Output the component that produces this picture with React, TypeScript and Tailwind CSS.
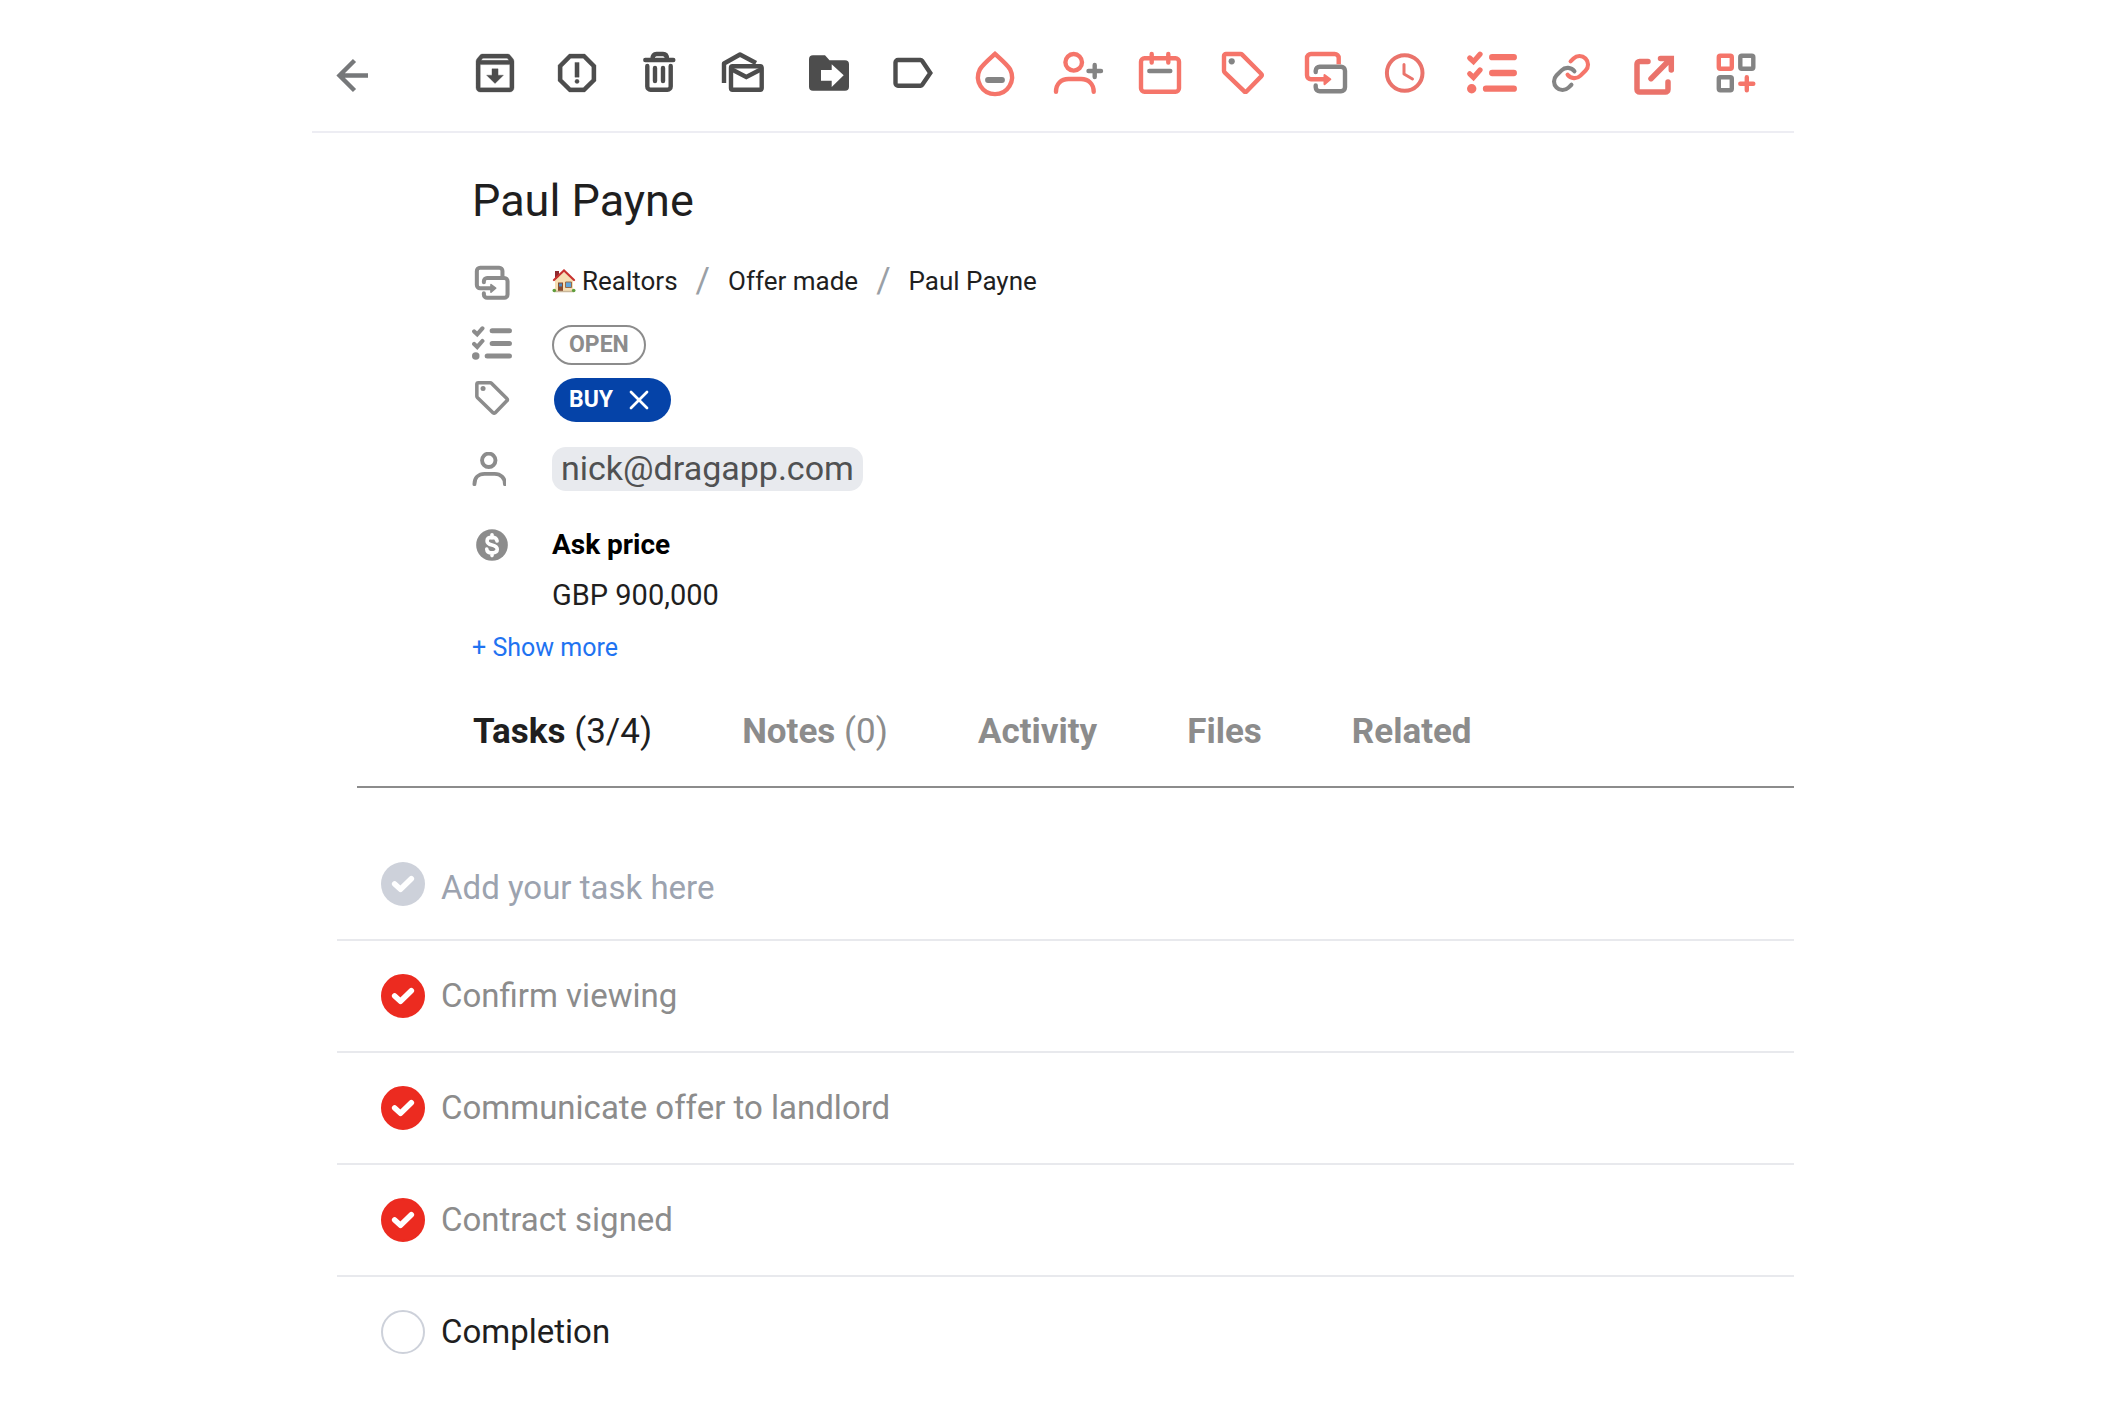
import { useState } from 'react';
import type { ReactNode } from 'react';
import { X } from 'lucide-react';

const CORAL = '#f5756a';
const ROSE = '#ea736b';
const GREY = '#848484';
const DARK = '#4d4d4d';

const ToolIcon = ({ children }: { children: ReactNode }) => (
  <svg viewBox="0 0 60 48" className="w-[60px] h-12" fill="none" strokeWidth={4.4} aria-hidden="true">
    {children}
  </svg>
);

// Shapes shared by the toolbar and the detail rows
const MoveShape = ({ front, back }: { front: string; back: string }) => (
  <g strokeLinecap="round">
    <path d="M51 21.7a4 4 0 0 0-4-4H25.7a4 4 0 0 0-4 4V23M21.7 36.5v1.8a4 4 0 0 0 4 4H47a4 4 0 0 0 4-4V21.7" stroke={back} />
    <path d="M44.7 15.2V9a4 4 0 0 0-4-4H17a4 4 0 0 0-4 4v17.3a4 4 0 0 0 4 4h14" stroke={front} strokeLinecap="butt" />
    <path d="M30.5 26l5.800 4.300-5.800 4.900z" fill={front} stroke={front} strokeWidth={2} strokeLinejoin="round" />
  </g>
);

const ListShape = ({ color }: { color: string }) => (
  <g stroke={color} strokeLinecap="round">
    <path d="M9.7 9l3.8 3.6L20 5.2M9.7 24.8l3.8 3.6L20 21" strokeWidth={5.2} />
    <path d="M32.2 8.2h21.6M32.2 24h21.6M26 39.7h27.8" strokeWidth={6.3} />
    <circle cx={11.7} cy={39.7} r={4.7} fill={color} stroke="none" />
  </g>
);

const TagShape = ({ color, dot }: { color: string; dot: string }) => (
  <g>
    <path d="M15 5h14.7a2 2 0 0 1 1.4.6L50.4 25a1.5 1.5 0 0 1 0 2.2L35.5 42.4a1.5 1.5 0 0 1-2.2 0L13.6 23.3a2 2 0 0 1-.6-1.4V7a2 2 0 0 1 2-2z" stroke={color} />
    <circle cx={20.7} cy={12.3} r={3.1} fill={dot} />
  </g>
);

const PersonShape = ({ color }: { color: string }) => (
  <g stroke={color} strokeLinecap="round">
    <circle cx={28.7} cy={13.3} r={8.3} />
    <path d="M11 42.7C11 35 16 30 23.5 30H36c7.5 0 12.7 5 12.7 12.7" />
  </g>
);

const tools = [
  {
    label: 'Archive',
    icon: (
      <g transform="translate(5.7 -1.3) scale(2.11)" fill={DARK} stroke={DARK} strokeWidth={0.15}>
        <path d="M20.54 5.23l-1.39-1.68C18.88 3.21 18.47 3 18 3H6c-.47 0-.88.21-1.16.55L3.46 5.23C3.17 5.57 3 6.02 3 6.5V19c0 1.1.9 2 2 2h14c1.1 0 2-.9 2-2V6.5c0-.48-.17-.93-.46-1.27zM6.24 5h11.52l.83 1H5.42l.82-1zM5 19V8h14v11H5zm8.45-9h-2.9v3H8l4 4 4-4h-2.55z" />
      </g>
    ),
  },
  {
    label: 'Report spam',
    icon: (
      <g transform="translate(4.7 -1.3) scale(2.11)" fill={DARK} stroke={DARK} strokeWidth={0.15}>
        <path d="M15.73 3H8.27L3 8.27v7.46L8.27 21h7.46L21 15.73V8.27L15.73 3zM19 14.9L14.9 19H9.1L5 14.9V9.1L9.1 5h5.8L19 9.1v5.8z" />
        <circle cx={12} cy={16} r={1} />
        <path d="M11 7h2v7h-2z" />
      </g>
    ),
  },
  {
    label: 'Delete',
    icon: (
      <g stroke={DARK} strokeLinecap="round">
        <path d="M15.3 11h28M22.5 10c0-3.5 1.5-5 4-5h6.5c2.5 0 4 1.5 4 5" />
        <path d="M17.3 17v20.5a3.2 3.2 0 0 0 3.2 3.2h17a3.2 3.2 0 0 0 3.2-3.2V17M25 19v13M33 19v13" />
      </g>
    ),
  },
  {
    label: 'Mark as read',
    icon: (
      <g stroke={DARK}>
        <path d="M11 34V14.5L27 5.5l16 8.5" strokeLinejoin="round" />
        <rect x={18} y={17.3} width={30.7} height={23.4} rx={1.5} />
        <path d="M18 20l15.3 8L48.7 20" />
      </g>
    ),
  },
  {
    label: 'Move to folder',
    icon: (
      <g>
        <path d="M17 6.3h12l4.5 5H49a4 4 0 0 1 4 4v22.4a4 4 0 0 1-4 4H17a4 4 0 0 1-4-4V10.3a4 4 0 0 1 4-4z" fill={DARK} />
        <path d="M25 21h10.7v-5.7l12 11-12 11.7v-6.3H25z" fill="#fff" />
      </g>
    ),
  },
  {
    label: 'Label',
    icon: <path d="M19 11h22.5a2 2 0 0 1 1.6.8L51.3 24l-8.2 12a2 2 0 0 1-1.6.8H19a2.5 2.5 0 0 1-2.5-2.5V13.5A2.5 2.5 0 0 1 19 11z" stroke={DARK} />,
  },
  {
    label: 'Color',
    icon: (
      <g strokeLinecap="round">
        <path d="M33 5C27.5 10 20.5 16 17.8 20.5a17 17 0 1 0 30.4 0C45.5 16 38.5 10 33 5z" stroke={CORAL} />
        <path d="M26 31h14" stroke={GREY} strokeWidth={5.8} />
      </g>
    ),
  },
  {
    label: 'Assign',
    icon: (
      <g>
        <PersonShape color={CORAL} />
        <path d="M43.5 22H56M49.7 16v12" stroke={GREY} strokeLinecap="round" />
      </g>
    ),
  },
  {
    label: 'Due date',
    icon: (
      <g strokeLinecap="round">
        <rect x={13} y={9.3} width={38} height={33.4} rx={3.5} stroke={CORAL} />
        <path d="M23.7 5v8.5M40.3 5v8.5" stroke={CORAL} />
        <path d="M21.3 22h21" stroke={GREY} />
      </g>
    ),
  },
  { label: 'Tag', icon: <TagShape color={CORAL} dot={GREY} /> },
  { label: 'Move to board', icon: <MoveShape front={CORAL} back={GREY} /> },
  {
    label: 'Snooze',
    icon: (
      <g stroke={ROSE} strokeLinecap="round" strokeLinejoin="round">
        <circle cx={27.7} cy={24} r={17.8} strokeWidth={4} />
        <path d="M27 15.5V25l8.5 5" strokeWidth={3} />
      </g>
    ),
  },
  { label: 'Tasks', icon: <ListShape color={CORAL} /> },
  {
    label: 'Copy link',
    icon: (
      <g transform="translate(7.5 3.5) scale(1.71)" strokeWidth={2.4} strokeLinecap="round">
        <path d="M10 13a5 5 0 0 0 7.54.54l3-3a5 5 0 0 0-7.07-7.07l-1.72 1.71" stroke={CORAL} />
        <path d="M14 11a5 5 0 0 0-7.54-.54l-3 3a5 5 0 0 0 7.07 7.07l1.71-1.71" stroke={GREY} />
      </g>
    ),
  },
  {
    label: 'Open in new window',
    icon: (
      <g stroke={ROSE} strokeWidth={5.5} strokeLinecap="round">
        <path d="M22 12.5h-8.5A2.5 2.5 0 0 0 11 15v25.5a2.5 2.5 0 0 0 2.5 2.5h26a2.5 2.5 0 0 0 2.5-2.5V33" />
        <path d="M25 29.7L44.5 10M34.5 9.5h10.8V21" />
      </g>
    ),
  },
  {
    label: 'Add app',
    icon: (
      <g>
        <rect x={9.8} y={6.8} width={13} height={13} rx={1.5} stroke={CORAL} />
        <rect x={31.3} y={6.8} width={13} height={13} rx={1.5} stroke={GREY} />
        <rect x={9.8} y={28.2} width={13} height={13} rx={1.5} stroke={GREY} />
        <path d="M31.3 34.7h13M37.8 28.2v13" stroke={CORAL} strokeLinecap="round" />
      </g>
    ),
  },
];

const HouseIcon = () => (
  <svg viewBox="0 0 24 24" className="w-6 h-6" aria-hidden="true">
    <path d="M3 2h4v8H3z" fill="#8e2a2f" />
    <path d="M3 11l9-8 9 8v12H3z" fill="#f6dfb4" />
    <path d="M2 11L12 1.500l10 9.500" fill="none" stroke="#c8332f" strokeWidth={2.2} strokeLinecap="round" />
    <path d="M6 13.5h5V23H6z" fill="#8a4a2c" />
    <path d="M7 14.5h3v3H7z" fill="#4f8ac0" />
    <path d="M13.5 13h6v5.5h-6z" fill="#5fa6dc" stroke="#9a6a45" strokeWidth={1} />
    <path d="M2.5 22.5h19" stroke="#c9b79a" strokeWidth={1.5} />
    <circle cx={2.3} cy={21.5} r={1.8} fill="#5f9e3c" />
    <circle cx={21.7} cy={21.5} r={1.8} fill="#5f9e3c" />
  </svg>
);

const Check = () => (
  <svg viewBox="0 0 44 44" className="absolute inset-0 w-11 h-11 pointer-events-none" fill="none" aria-hidden="true">
    <path d="M13.7 22l5.8 5.3 10.8-10.6" stroke="#fff" strokeWidth={5.6} strokeLinecap="round" strokeLinejoin="round" />
  </svg>
);

const Field = ({ icon, children }: { icon: ReactNode; children: ReactNode }) => (
  <div className="grid grid-cols-[80px_1fr] items-center h-11">
    {icon}
    <div className="flex items-center">{children}</div>
  </div>
);

const tabs = [
  { name: 'Tasks', count: '(3/4)' },
  { name: 'Notes', count: '(0)' },
  { name: 'Activity' },
  { name: 'Files' },
  { name: 'Related' },
];

const initialTasks = [
  { id: 1, title: 'Confirm viewing', done: true },
  { id: 2, title: 'Communicate offer to landlord', done: true },
  { id: 3, title: 'Contract signed', done: true },
  { id: 4, title: 'Completion', done: false },
];

const App = () => {
  const [tasks, setTasks] = useState(initialTasks);
  const [activeTab, setActiveTab] = useState('Tasks');
  const [draft, setDraft] = useState('');

  const toggleTask = (id: number) => {
    setTasks(tasks.map(t => (t.id === id ? { ...t, done: !t.done } : t)));
  };

  const addTask = () => {
    if (!draft.trim()) return;
    setTasks([{ id: Date.now(), title: draft, done: false }, ...tasks]);
    setDraft('');
  };

  return (
    <main className="w-full max-w-[1482px] mx-auto bg-white text-[#1f1f1f] font-['Roboto',sans-serif]">
      <header className="flex pt-[49px] pb-[34px] pl-2 border-b-2 border-[#ededf3]">
        <div className="w-36 shrink-0">
          <button type="button" aria-label="Back" className="block">
            <ToolIcon>
              <path d="M48 26.5H20M34.5 11.5l-15 15 15 15" stroke="#76787a" />
            </ToolIcon>
          </button>
        </div>
        <div className="flex gap-[23px]">
          {tools.map(tool => (
            <button key={tool.label} type="button" aria-label={tool.label} className="shrink-0">
              <ToolIcon>{tool.icon}</ToolIcon>
            </button>
          ))}
        </div>
      </header>

      <section className="pl-40 pt-9">
        <h1 className="pb-[26px] text-[45px] leading-[64px]">Paul Payne</h1>

        <Field
          icon={
            <svg viewBox="7 -5.7 52 54.3" className="w-[42px] h-11" fill="none" strokeWidth={5} aria-hidden="true">
              <MoveShape front="#8c8c8c" back="#8c8c8c" />
            </svg>
          }
        >
          <nav aria-label="Breadcrumb" className="flex items-center gap-[18px] text-[26px] leading-8">
            <a href="#realtors" className="flex items-center gap-[6px]">
              <HouseIcon />
              Realtors
            </a>
            <span className="text-[35px] leading-8 text-[#9aa0a6]">/</span>
            <a href="#offer-made">Offer made</a>
            <span className="text-[35px] leading-8 text-[#9aa0a6]">/</span>
            <a href="#paul-payne">Paul Payne</a>
          </nav>
        </Field>

        <div className="pt-5">
          <Field
            icon={
              <svg viewBox="7 -1.5 50 55" className="w-10 h-11" fill="none" aria-hidden="true">
                <ListShape color="#8c8c8c" />
              </svg>
            }
          >
            <span className="h-10 px-[15px] border-2 border-[#8c8c8c] rounded-full text-[23px] leading-9 font-bold text-[#8c8c8c]">OPEN</span>
          </Field>
        </div>

        <div className="pt-[11px]">
          <Field
            icon={
              <svg viewBox="7 -0.7 52 54.3" className="w-[42px] h-11" fill="none" strokeWidth={4.4} aria-hidden="true">
                <TagShape color="#8c8c8c" dot="#8c8c8c" />
              </svg>
            }
          >
            <span className="flex items-center gap-[10px] h-11 ml-[2px] pl-[15px] pr-4 rounded-full bg-[#0543a8] text-[23px] font-bold text-white">
              BUY
              <button type="button" aria-label="Remove tag BUY">
                <X size={32} strokeWidth={2} />
              </button>
            </span>
          </Field>
        </div>

        <div className="pt-[25px]">
          <Field
            icon={
              <svg viewBox="8 3 42 42" className="w-[34px] h-[34px]" fill="none" strokeWidth={4.8} aria-hidden="true">
                <PersonShape color="#8c8c8c" />
              </svg>
            }
          >
            <span className="h-11 px-[9px] rounded-[14px] bg-[#e8eaee] text-[34px] leading-[42px] text-[#505152]">nick@dragapp.com</span>
          </Field>
        </div>

        <dl className="pt-8">
          <Field
            icon={
              <svg viewBox="0 0 24 24" className="w-10 h-[38px]" fill="#8c8c8c" aria-hidden="true">
                <circle cx={12} cy={12} r={10} />
                <path
                  d="M15.2 9.400c-.2-1.400-1.400-2.300-3.200-2.300-1.900 0-3.100.9-3.100 2.300 0 1.500 1.200 2.100 3.100 2.600s3.300 1.200 3.300 2.700c0 1.400-1.300 2.300-3.300 2.300s-3.200-.9-3.300-2.400M12 5.500v2M12 17v1.700"
                  fill="none"
                  stroke="#fff"
                  strokeWidth={2.3}
                  strokeLinecap="round"
                />
              </svg>
            }
          >
            <dt className="text-[28px] leading-10 font-bold text-black">Ask price</dt>
          </Field>
          <dd className="pl-20 pt-2 text-[29px] leading-10">GBP 900,000</dd>
        </dl>
        <button type="button" className="block mt-[13px] text-[25px] leading-10 text-[#1f73f1]">+ Show more</button>
      </section>

      <div role="tablist" className="flex items-center gap-[90px] h-[120px] ml-[45px] pl-[116px] pt-[10px] border-b-2 border-[#8c8c8c]">
        {tabs.map(tab => (
          <button
            key={tab.name}
            type="button"
            role="tab"
            aria-selected={activeTab === tab.name}
            onClick={() => setActiveTab(tab.name)}
            className={`text-[35px] leading-10 ${activeTab === tab.name ? 'text-[#1f1f1f]' : 'text-[#8c8c8c]'}`}
          >
            <span className="font-bold">{tab.name}</span>
            {tab.count && ` ${tab.count}`}
          </button>
        ))}
      </div>

      <section className="ml-[25px]">
        <div className="flex items-start gap-4 pl-11 pt-[74px] pb-[26px] border-b-2 border-[#e8e9ed]">
          <button type="button" aria-label="Add task" onClick={addTask} className="relative shrink-0 w-11 h-11 rounded-full bg-[#cdd1da]">
            <Check />
          </button>
          <input
            type="text"
            aria-label="New task"
            placeholder="Add your task here"
            value={draft}
            onChange={e => setDraft(e.target.value)}
            className="flex-1 h-[51px] text-[33px] outline-none placeholder:text-[#9ca3af]"
          />
        </div>
        <ul>
          {tasks.map(task => (
            <li key={task.id} className="border-b-2 border-[#e8e9ed] last:border-b-0">
              <label className={`flex items-center gap-4 h-[110px] pl-11 text-[33px] leading-10 ${task.done ? 'text-[#8c8c8c]' : 'text-[#1f1f1f]'}`}>
                <span className="relative w-11 h-11">
                  <input
                    type="checkbox"
                    checked={task.done}
                    onChange={() => toggleTask(task.id)}
                    className="block appearance-none w-11 h-11 rounded-full border-2 border-[#cdd1da] checked:border-[#ec2b20] checked:bg-[#ec2b20]"
                  />
                  {task.done && <Check />}
                </span>
                {task.title}
              </label>
            </li>
          ))}
        </ul>
      </section>
    </main>
  );
};

export default App;
